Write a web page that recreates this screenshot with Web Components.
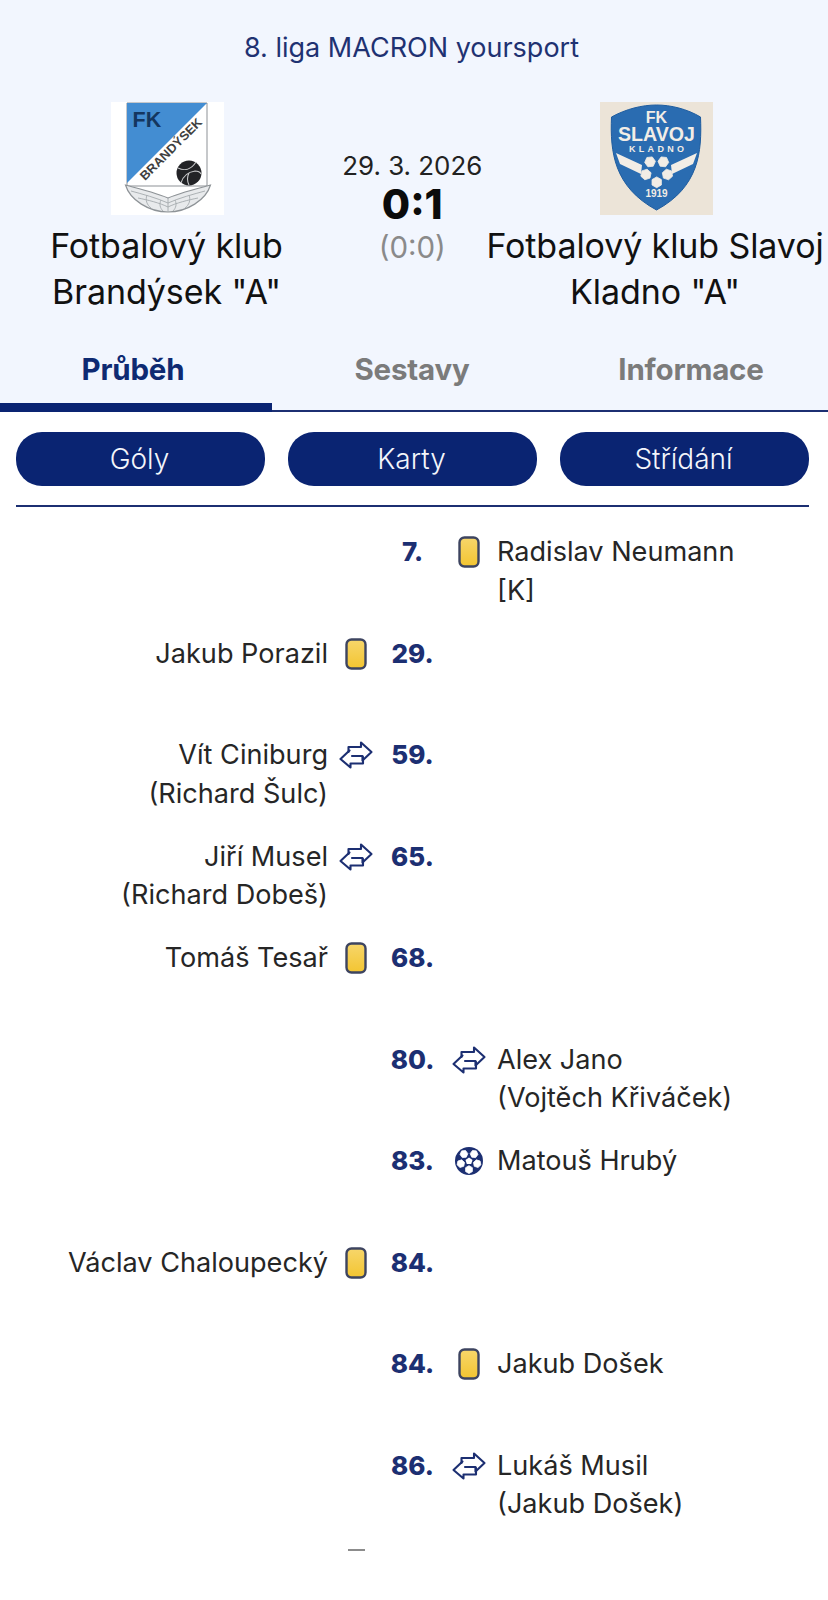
<!DOCTYPE html>
<html lang="cs">
<head>
<meta charset="utf-8">
<title>Průběh zápasu</title>
<style>
html,body{margin:0;padding:0;background:#fff;font-family:Inter,"Liberation Sans",sans-serif;}
match-page{display:block;}
</style>
</head>
<body>
<match-page></match-page>
<script>
const NAVY='#0a2472';
function patches(cx,cy,dist,r,fill){
  let out='';
  for(const a of [-126,-54,18,90,162]){
    const px=cx+dist*Math.cos(a*Math.PI/180),py=cy+dist*Math.sin(a*Math.PI/180);
    let pts=[];
    for(let i=0;i<6;i++){const t=(a+i*60)*Math.PI/180;pts.push((px+r*Math.cos(t)).toFixed(2)+','+(py+r*Math.sin(t)).toFixed(2));}
    out+=`<polygon points="${pts.join(' ')}" fill="${fill}" stroke="${fill}" stroke-width=".8" stroke-linejoin="round"/>`;
  }
  return out;
}
const ICONS={
card:`<svg width="22" height="32" viewBox="0 0 22 32"><defs><linearGradient id="g" x1="0" y1="0" x2="0" y2="1"><stop offset="0" stop-color="#f7d66b"/><stop offset="1" stop-color="#f3c531"/></linearGradient></defs><rect x="1.500" y="1.500" width="19" height="29" rx="5" fill="url(#g)" stroke="#3d4460" stroke-width="2.400"/></svg>`,
swap:`<svg width="34" height="28" viewBox="0 0 34 28" fill="none" stroke="#1c2f72" stroke-width="2.100" stroke-linejoin="round" stroke-linecap="round"><path d="M9.500 11V6H22V1.500L32.500 11 23.500 19.500V15H13"/><path d="M24 16V22.500H11.500V26.500L1.500 18 10.500 9.500"/></svg>`,
ball:`<svg width="30" height="30" viewBox="0 0 30 30"><circle cx="15" cy="15" r="14" fill="#1c2f72"/>${patches(15,15,8.600,3.900,'#fff')}<polygon points="15,11.500 18.500,14 17.200,18 12.800,18 11.500,14" fill="#fff"/></svg>`
};

class ClubLogo extends HTMLElement{
  constructor(){super();const s=this.attachShadow({mode:'open'});
    const k=this.getAttribute('kind');
    s.innerHTML=`<style>:host{display:block;width:113px;height:113px;margin:1px 0 0 2px}svg{display:block}text{font-family:"Liberation Sans",Arial,sans-serif;font-weight:700}</style>`+(k==='a'?ClubLogo.a:ClubLogo.b);
  }
}
ClubLogo.a=`<svg width="113" height="113" viewBox="0 0 113 113">
<rect width="113" height="113" fill="#fff"/>
<path d="M16 1H96V84H16z" fill="#fff" stroke="#8d9196" stroke-width="1"/>
<path d="M16 1H96L16 81z" fill="#438dd2"/>
<text x="21.500" y="25" font-size="21.500" fill="#14365f">FK</text>
<text transform="translate(34 79) rotate(-45)" font-size="12.500" fill="#3f3f3f" textLength="82" lengthAdjust="spacingAndGlyphs">BRANDÝSEK</text>
<circle cx="78" cy="71" r="12.500" fill="#222326"/>
<path d="M67 66c6 3 13 2 18-6M70 81c2-7 7-11 14-12 3 0 5 1 6 3M78 71c-2 4-2 8 0 12" fill="none" stroke="#c6c7c9" stroke-width="1.100"/>
<path d="M14.500 83C30 87 45 91 57 96C69 91 84 87 99.500 83C95 98 76 110 57 110C38 110 19 98 14.500 83z" fill="#e8eaec" stroke="#8e9397" stroke-width="1.200"/>
<g fill="none" stroke="#a5aaae" stroke-width=".9">
<path d="M20 89c11 3 26 7 37 12 11-5 26-9 37-12M27 96c10 2 22 5 30 9 8-4 20-7 30-9M57 96v14M36 93c-2 5 0 10 4 13M78 93c2 5 0 10-4 13M50 98c-2 4-1 8 2 11M64 98c2 4 1 8-2 11"/>
</g></svg>`;
ClubLogo.b=`<svg width="113" height="113" viewBox="0 0 113 113">
<rect width="113" height="113" fill="#ece4d8"/>
<path d="M11.500 15C26 7 42 3 56.500 3S87 7 100.500 15C102 50 99 85 56.500 108C14 85 10 50 11.500 15z" fill="#2a6cb1" stroke="#1e5c9f"/>
<g fill="#f2ede6" text-anchor="middle">
<text x="56.500" y="20.500" font-size="16">FK</text>
<text x="56.500" y="39" font-size="20" textLength="77" lengthAdjust="spacingAndGlyphs">SLAVOJ</text>
<text x="56.500" y="49.500" font-size="9" textLength="55">KLADNO</text>
<text x="56.500" y="95" font-size="10">1919</text>
</g>
<path d="M16 51L42 63 41 72 20 62zM97 51L71 63 72 72 93 62z" fill="#f2ede6"/>
${patches(56.700,69,11.300,5.400,'#f2ede6')}
</svg>`;
customElements.define('club-logo',ClubLogo);

class TeamBlock extends HTMLElement{
  constructor(){super();this.attachShadow({mode:'open'}).innerHTML=`<style>
  :host{display:flex;flex-direction:column;align-items:center;width:333px;flex:none;color:#111;text-align:center}
  .n{margin-top:8px;font-size:34px;line-height:46px;font-weight:400;letter-spacing:-.1px;white-space:nowrap}
  </style><slot name="logo"></slot><div class="n"><slot></slot></div>`;}
}
customElements.define('team-block',TeamBlock);

class MatchHeader extends HTMLElement{
  constructor(){super();this.attachShadow({mode:'open'}).innerHTML=`<style>
  :host{display:block;background:#f2f6fe}
  .t{padding:28px 5px 0 0;height:101px;box-sizing:border-box;text-align:center;font-size:27px;line-height:40px;color:#1f3272}
  .g{display:flex;justify-content:space-between;align-items:flex-start;height:223px;padding-right:6.500px}
  .c{padding:47px 0 0 3px;text-align:center;width:146px;flex:none}
  .d{font-size:25.900px;line-height:36px;color:#222}
  .s{font-size:41px;line-height:42px;font-weight:800;color:#0b0b0b;margin-top:-1px}
  .h{font-size:29.500px;line-height:40px;color:#8a8a8a;margin-top:2px}
  </style><div class="t">8. liga MACRON yoursport</div>
  <div class="g"><slot name="home"></slot><div class="c"><div class="d">29. 3. 2026</div><div class="s">0:1</div><div class="h">(0:0)</div></div><slot name="away"></slot></div>
  <slot name="tabs"></slot>`;}
}
customElements.define('match-header',MatchHeader);

class TabBar extends HTMLElement{
  constructor(){super();this.attachShadow({mode:'open'}).innerHTML=`<style>
  :host{display:grid;grid-template-columns:266px 292px 266px;height:88px;padding-top:25px;box-sizing:border-box;border-bottom:2px solid #1c2f72}
  </style><slot></slot>`;}
}
customElements.define('tab-bar',TabBar);

class TabItem extends HTMLElement{
  constructor(){super();this.attachShadow({mode:'open'}).innerHTML=`<style>
  :host{display:block;position:relative;text-align:center;font-size:29.500px;font-weight:700;line-height:40px;color:#7b7b7b;letter-spacing:-.2px}
  :host([active]){color:#0e2a72}
  .u{display:none;position:absolute;left:0;right:-6px;top:54px;height:9px;background:${NAVY}}
  :host([active]) .u{display:block}
  </style><slot></slot><div class="u"></div>`;}
}
customElements.define('tab-item',TabItem);

class FilterBar extends HTMLElement{
  constructor(){super();this.attachShadow({mode:'open'}).innerHTML=`<style>
  :host{display:flex;gap:23px;margin:20px 19px 0 16px;padding-bottom:19px;border-bottom:2px solid #1c2f72}
  </style><slot></slot>`;}
}
customElements.define('filter-bar',FilterBar);

class FilterButton extends HTMLElement{
  constructor(){super();this.attachShadow({mode:'open'}).innerHTML=`<style>
  :host{flex:1 1 0;display:flex;align-items:center;justify-content:center;height:54px;padding-right:2px;border-radius:26px;background:${NAVY};color:#f4f6fb;font-size:28px;font-weight:300}
  </style><slot></slot>`;}
}
customElements.define('filter-button',FilterButton);

class EventList extends HTMLElement{
  constructor(){super();this.attachShadow({mode:'open'}).innerHTML=`<style>
  :host{display:block;padding-top:26px}
  </style><slot></slot>`;}
}
customElements.define('event-list',EventList);

class MatchEvent extends HTMLElement{
  constructor(){super();const side=this.getAttribute('side'),min=this.getAttribute('min'),ic=ICONS[this.getAttribute('icon')];
    this.attachShadow({mode:'open'}).innerHTML=`<style>
    :host{display:grid;grid-template-columns:328px 56px 57px 55px 270px;height:101.500px;box-sizing:border-box;font-size:27.100px;line-height:38.500px;color:#262626}
    .l{text-align:right}
    .i{display:flex;justify-content:center;height:38.500px;align-items:center}
    .m{text-align:center;font-weight:800;color:#1c2f72;font-size:26px}
    .r{padding-left:1px;box-sizing:border-box}
    </style>
    <div class="l">${side==='l'?'<slot></slot>':''}</div>
    <div class="i">${side==='l'?ic:''}</div>
    <div class="m">${min}</div>
    <div class="i">${side==='r'?ic:''}</div>
    <div class="r">${side==='r'?'<slot></slot>':''}</div>`;}
}
customElements.define('match-event',MatchEvent);

class PageEnd extends HTMLElement{
  constructor(){super();this.attachShadow({mode:'open'}).innerHTML=`<style>
  :host{display:grid;grid-template-columns:328px 56px}
  .d{grid-column:2;justify-self:center;width:17px;height:2px;background:#8c8c8c;margin-top:1px}
  </style><div class="d"></div>`;}
}
customElements.define('page-end',PageEnd);

class MatchPage extends HTMLElement{
  constructor(){super();this.attachShadow({mode:'open'}).innerHTML=`
  <style>:host{display:block;width:828px}</style>
  <match-header>
    <team-block slot="home"><club-logo slot="logo" kind="a"></club-logo>Fotbalový klub<br>Brandýsek "A"</team-block>
    <team-block slot="away"><club-logo slot="logo" kind="b"></club-logo>Fotbalový klub Slavoj<br>Kladno "A"</team-block>
    <tab-bar slot="tabs"><tab-item active>Průběh</tab-item><tab-item>Sestavy</tab-item><tab-item>Informace</tab-item></tab-bar>
  </match-header>
  <filter-bar><filter-button>Góly</filter-button><filter-button>Karty</filter-button><filter-button>Střídání</filter-button></filter-bar>
  <event-list>
    <match-event side="r" min="7." icon="card">Radislav Neumann [K]</match-event>
    <match-event side="l" min="29." icon="card">Jakub Porazil</match-event>
    <match-event side="l" min="59." icon="swap">Vít Ciniburg<br>(Richard Šulc)</match-event>
    <match-event side="l" min="65." icon="swap">Jiří Musel<br>(Richard Dobeš)</match-event>
    <match-event side="l" min="68." icon="card">Tomáš Tesař</match-event>
    <match-event side="r" min="80." icon="swap">Alex Jano<br>(Vojtěch Křiváček)</match-event>
    <match-event side="r" min="83." icon="ball">Matouš Hrubý</match-event>
    <match-event side="l" min="84." icon="card">Václav Chaloupecký</match-event>
    <match-event side="r" min="84." icon="card">Jakub Došek</match-event>
    <match-event side="r" min="86." icon="swap">Lukáš Musil<br>(Jakub Došek)</match-event>
    <page-end></page-end>
  </event-list>`;}
}
customElements.define('match-page',MatchPage);
</script>
</body>
</html>
